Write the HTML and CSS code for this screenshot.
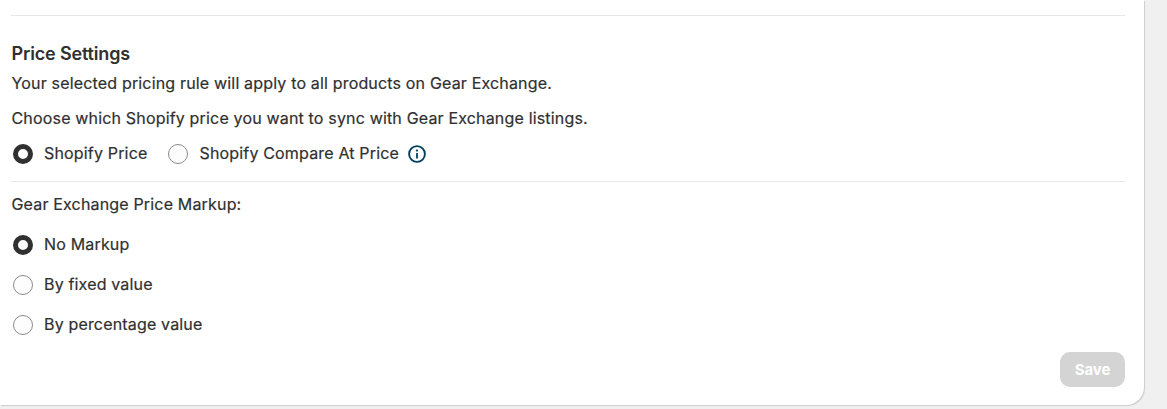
FILE: index.html
```html
<!DOCTYPE html>
<html lang="en">
<head>
    <meta charset="UTF-8">
    <meta name="viewport" content="width=device-width, initial-scale=1.0">
    <title>Price Settings</title>
    <link rel="stylesheet" href="styles.css">
</head>
<body>
    <div class="card">
        <form class="settings">
            <div class="intro">
                <h2>Price Settings</h2>
                <p>Your selected pricing rule will apply to all products on Gear Exchange.</p>
            </div>
            <p class="hint">Choose which Shopify price you want to sync with Gear Exchange listings.</p>
            <div class="price-source">
                <label class="choice"><input type="radio" name="price" checked>Shopify Price</label>
                <label class="choice"><input type="radio" name="price">Shopify Compare At Price</label>
                <svg class="info" viewBox="0 0 20 20" fill="none">
                    <circle cx="10" cy="10" r="7.9" stroke="#00405e" stroke-width="1.9"/>
                    <circle cx="10" cy="6.6" r="1.1" fill="#00405e"/>
                    <path d="M10 9.6v4.2" stroke="#00405e" stroke-width="1.8" stroke-linecap="round"/>
                </svg>
            </div>
            <div class="markup">
                <p>Gear Exchange Price Markup:</p>
                <label class="choice"><input type="radio" name="markup" checked>No Markup</label>
                <label class="choice"><input type="radio" name="markup">By fixed value</label>
                <label class="choice"><input type="radio" name="markup">By percentage value</label>
            </div>
            <div class="actions">
                <button class="btn" type="button" disabled>Save</button>
            </div>
        </form>
    </div>
</body>
</html>
```
FILE: styles.css
```css
body {
    margin: 0;
    height: 409px;
    overflow: hidden;
    background-color: #f0f0f0;
    font-family: Inter, "Liberation Sans", sans-serif;
    font-size: 16px;
    line-height: 25px;
    font-weight: 400;
    letter-spacing: 0.17px;
    color: #303030;
}
h2, p {
    margin: 0;
    padding-left: 0.5px;
}
p, label {
    -webkit-text-stroke: 0.2px #303030;
}
.card {
    box-sizing: border-box;
    width: 1144px;
    height: 405px;
    padding: 15px 19px 0 11px;
    background-color: #fff;
    border-radius: 0 0 18px 0;
    box-shadow: 1px 1px 1px #ccc;
}
.settings {
    border-top: 1px solid #e8e8e8;
}
.intro {
    padding-top: 23px;
}
h2 {
    padding-bottom: 2px;
    font-size: 18px;
    line-height: 30px;
    font-weight: 600;
    letter-spacing: -0.15px;
}
.hint {
    margin-top: 10px;
}
.price-source {
    display: flex;
    align-items: center;
    height: 45px;
    padding-bottom: 5px;
    border-bottom: 1px solid #e8e8e8;
}
.choice {
    display: flex;
    align-items: center;
    gap: 11px;
}
.choice input {
    appearance: none;
    box-sizing: border-box;
    width: 20px;
    height: 20px;
    margin: 0 0 0 2px;
    border: 1px solid #8a8a8a;
    border-radius: 50%;
    background-color: #fdfdfd;
}
.choice input:checked {
    border: 5px solid #303030;
}
.price-source .choice {
    margin-right: 19px;
}
.price-source .choice + .choice {
    margin-right: 7.5px;
}
.info {
    width: 20px;
    height: 20px;
}
.markup {
    padding-top: 10px;
}
.markup .choice {
    height: 25px;
    margin-top: 15px;
}
.actions {
    display: flex;
    justify-content: flex-end;
    margin-top: 15px;
}
.btn {
    width: 65px;
    height: 35px;
    padding: 0;
    border: none;
    border-radius: 10px;
    background-color: #d4d4d4;
    color: #fff;
    font: 700 15px Inter, "Liberation Sans", sans-serif;
    letter-spacing: -0.15px;
}
```
